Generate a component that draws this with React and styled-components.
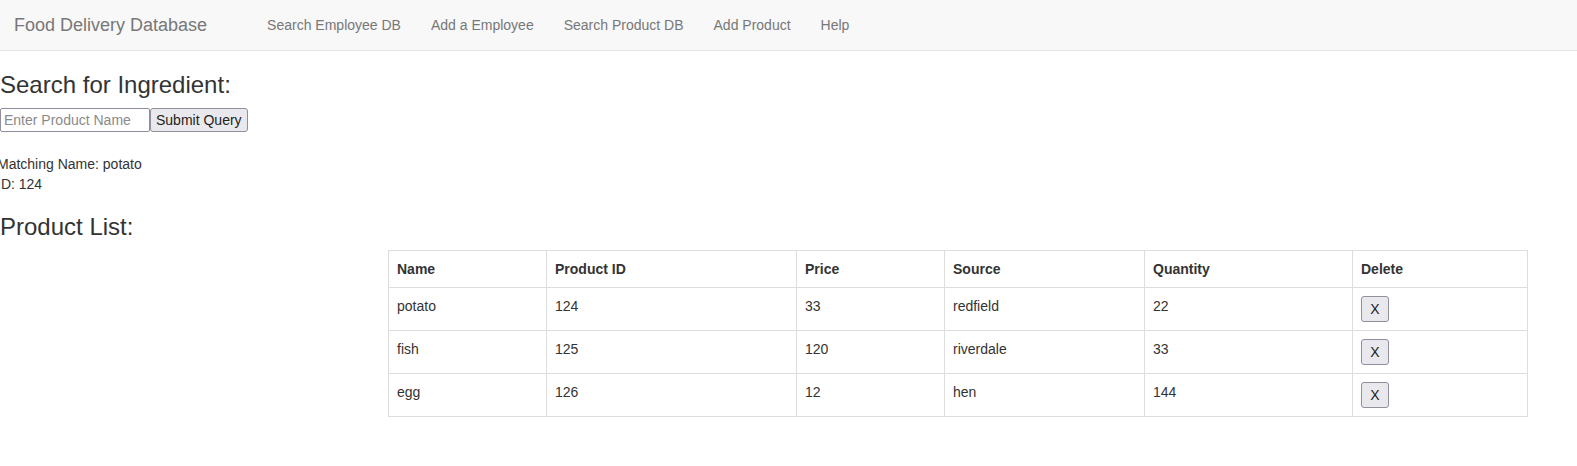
import React from "react";
import styled, { createGlobalStyle } from "styled-components";

const GlobalStyle = createGlobalStyle`
  html, body { margin: 0; padding: 0; background: #fff; }
  body {
    font-family: "Liberation Sans", Arial, sans-serif;
    font-size: 14px;
    line-height: 1.42857143;
    color: #333;
  }
  * { box-sizing: border-box; }
`;

const Navbar = styled.nav`
  display: flex;
  align-items: center;
  height: 51px;
  background: #f8f8f8;
  border-bottom: 1px solid #e7e7e7;
`;

const Brand = styled.a`
  padding: 15px 15px 15px 14px;
  font-size: 18px;
  line-height: 20px;
  color: #777;
  text-decoration: none;
`;

const NavList = styled.ul`
  display: flex;
  list-style: none;
  margin: 0;
  padding: 0 0 0 30px;
`;

const NavLink = styled.a`
  display: block;
  padding: 15px;
  line-height: 20px;
  color: #777;
  text-decoration: none;
`;

const Heading = styled.h3`
  font-size: 24px;
  font-weight: 500;
  line-height: 1.1;
  margin: ${(p) => p.$top}px 0 ${(p) => p.$bottom}px;
  color: #333;
`;

const SearchForm = styled.form`
  display: flex;
  margin: 0;
`;

const TextInput = styled.input`
  width: 150px;
  height: 24px;
  padding: 1px 3px;
  border: 1px solid #8f8f9d;
  border-radius: 2px;
  font: inherit;
  line-height: 20px;
  color: #333;
  &::placeholder { color: #8a8a8a; }
`;

const Button = styled.button`
  height: ${(p) => p.$h}px;
  ${(p) => (p.$w ? `width: ${p.$w}px;` : "")}
  padding: 0 ${(p) => (p.$w ? 0 : 5)}px;
  border: 1px solid #8f8f9d;
  border-radius: 3px;
  background: #e9e9ed;
  font-family: "Liberation Sans", Arial, sans-serif;
  font-size: 14px;
  line-height: 20px;
  color: #222;
`;

const ResultBlock = styled.div`
  margin: 22px 0 0 -3px;
`;

const ResultLine = styled.div`
  line-height: 20px;
`;

const Table = styled.table`
  margin: 0 0 0 388px;
  width: 1139px;
  table-layout: fixed;
  border-collapse: collapse;
  border: 1px solid #ddd;
`;

const Th = styled.th`
  text-align: left;
  padding: 8px;
  border: 1px solid #ddd;
  line-height: 20px;
  font-weight: bold;
  vertical-align: top;
`;

const Td = styled.td`
  padding: 8px;
  border: 1px solid #ddd;
  line-height: 20px;
  vertical-align: top;
  height: 42px;
`;

const columns = [
  { label: "Name", width: 158 },
  { label: "Product ID", width: 250 },
  { label: "Price", width: 148 },
  { label: "Source", width: 200 },
  { label: "Quantity", width: 208 },
  { label: "Delete", width: 175 },
];

const products = [
  { name: "potato", id: 124, price: 33, source: "redfield", qty: 22 },
  { name: "fish", id: 125, price: 120, source: "riverdale", qty: 33 },
  { name: "egg", id: 126, price: 12, source: "hen", qty: 144 },
];

const navItems = [
  "Search Employee DB",
  "Add a Employee",
  "Search Product DB",
  "Add Product",
  "Help",
];

export default function App() {
  return (
    <>
      <GlobalStyle />
      <Navbar>
        <Brand href="#">Food Delivery Database</Brand>
        <NavList>
          {navItems.map((n) => (
            <li key={n}>
              <NavLink href="#">{n}</NavLink>
            </li>
          ))}
        </NavList>
      </Navbar>
      <Heading $top={21} $bottom={10}>Search for Ingredient:</Heading>
      <SearchForm onSubmit={(e) => e.preventDefault()}>
        <TextInput placeholder="Enter Product Name" />
        <Button $h={24} type="submit">Submit Query</Button>
      </SearchForm>
      <ResultBlock>
        <ResultLine>Matching Name: potato</ResultLine>
        <ResultLine>ID: 124</ResultLine>
      </ResultBlock>
      <Heading $top={20} $bottom={9}>Product List:</Heading>
      <Table>
        <colgroup>
          {columns.map((c) => (
            <col key={c.label} style={{ width: c.width }} />
          ))}
        </colgroup>
        <thead>
          <tr>
            {columns.map((c) => (
              <Th key={c.label}>{c.label}</Th>
            ))}
          </tr>
        </thead>
        <tbody>
          {products.map((p) => (
            <tr key={p.id}>
              <Td>{p.name}</Td>
              <Td>{p.id}</Td>
              <Td>{p.price}</Td>
              <Td>{p.source}</Td>
              <Td>{p.qty}</Td>
              <Td>
                <Button $h={26} $w={28}>X</Button>
              </Td>
            </tr>
          ))}
        </tbody>
      </Table>
    </>
  );
}
